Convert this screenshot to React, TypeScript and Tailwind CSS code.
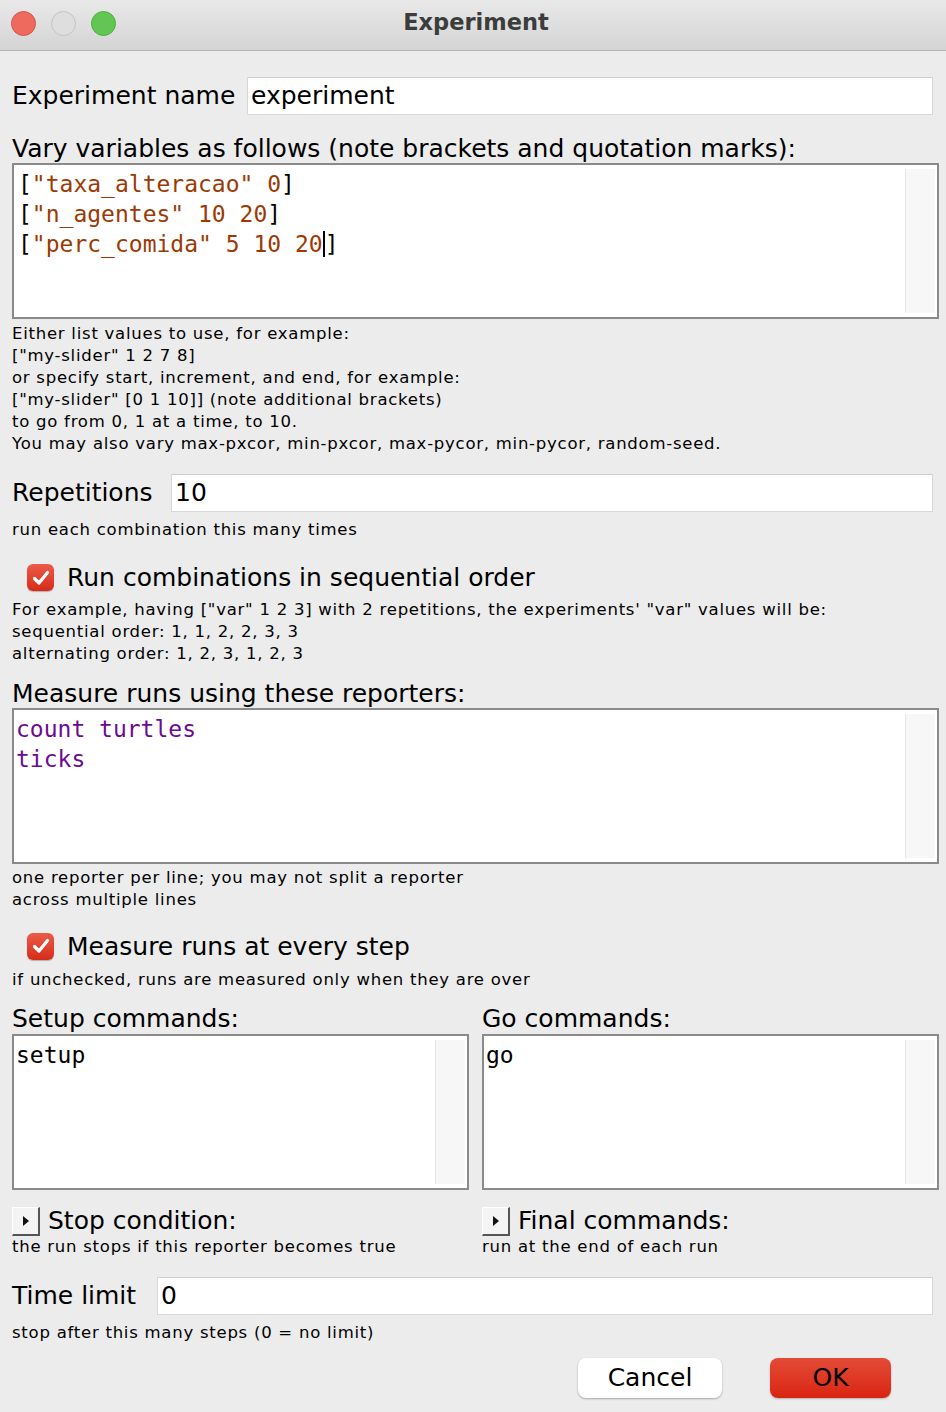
import React from 'react';

const ui = "font-['DejaVu_Sans','Liberation_Sans',sans-serif]";
const mono = "font-['DejaVu_Sans_Mono','Liberation_Mono',monospace]";
const small = 'text-[16.5px] leading-[22px] tracking-[0.75px]';

function Check() {
  return (
    <span className="w-[27px] h-[27px] rounded-[6px] bg-gradient-to-b from-[#ec5a48] to-[#d52a17] flex items-center justify-center shrink-0 shadow-[0_1px_1px_rgba(0,0,0,0.25)]">
      <svg width="18" height="16" viewBox="0 0 18 16">
        <path d="M2.5 8.5 L7 13 L15.5 2.5" fill="none" stroke="white" strokeWidth="3.2" strokeLinecap="round" strokeLinejoin="round" />
      </svg>
    </span>
  );
}

function TextArea({ children, pad = 'pl-[2px]' }: { children?: React.ReactNode; pad?: string }) {
  return (
    <div className="border-2 border-[#8a8a8a] bg-white flex h-[156px]">
      <div className={`flex-1 ${pad} pt-[4px] text-[23px] leading-[30px] ${mono}`}>{children}</div>
      <div className="w-[30px] bg-[#f7f7f7] border-l border-[#e6e6e6] my-[4px] mr-[2px]" />
    </div>
  );
}

function Field({ label, value, labelW }: { label: string; value: string; labelW: string }) {
  return (
    <div className="flex items-center">
      <span className={`text-[25px] text-black ${labelW}`}>{label}</span>
      <div className="flex-1 h-[38px] bg-white border border-[#d8d8d8] border-t-[#cfcfcf] mr-[6px] flex items-center pl-[3px] text-[25px]">
        {value}
      </div>
    </div>
  );
}

function Disclosure() {
  return (
    <span className="w-[28px] h-[29px] bg-[#f4f4f4] border-r-2 border-b-2 border-[#555] border-t border-l border-t-white border-l-white flex items-center justify-center shrink-0">
      <svg width="8" height="12" viewBox="0 0 8 12"><path d="M1 1 L7 6 L1 11 Z" fill="#111" /></svg>
    </span>
  );
}

export default function App() {
  const str = 'text-[#9c3a05]';
  return (
    <div className={`w-[946px] h-[1412px] bg-[#ececec] text-black ${ui}`}>
      {/* title bar */}
      <div className="h-[51px] bg-gradient-to-b from-[#e9e9e9] to-[#d4d4d4] border-b border-[#b5b5b5] flex items-center relative">
        <div className="flex gap-[15px] pl-[11px] absolute left-0 top-[11px]">
          <span className="w-[25px] h-[25px] rounded-full bg-[#ee6a5f] border border-[#d6534a]" />
          <span className="w-[25px] h-[25px] rounded-full bg-[#dedede] border border-[#c4c4c4]" />
          <span className="w-[25px] h-[25px] rounded-full bg-[#62c554] border border-[#4fae42]" />
        </div>
        <div className="flex-1 text-center text-[22.5px] font-bold text-[#3c3c3c] pb-[4px] pl-[6px]">Experiment</div>
      </div>

      <div className="pl-[12px] pt-[26px] pr-[7px]">
        <Field label="Experiment name" value="experiment" labelW="w-[235px]" />

        <div className="text-[25px] mt-[20px] leading-[28px]">Vary variables as follows (note brackets and quotation marks):</div>
        <TextArea pad="pl-[4px]">
          <div>[<span className={str}>"taxa_alteracao" 0</span>]</div>
          <div>[<span className={str}>"n_agentes" 10 20</span>]</div>
          <div>[<span className={str}>"perc_comida" 5 10 20</span><span className="border-l-2 border-black" />]</div>
        </TextArea>
        <div className={`${small} mt-[4px]`}>
          <div>Either list values to use, for example:</div>
          <div>["my-slider" 1 2 7 8]</div>
          <div>or specify start, increment, and end, for example:</div>
          <div>["my-slider" [0 1 10]] (note additional brackets)</div>
          <div>to go from 0, 1 at a time, to 10.</div>
          <div>You may also vary max-pxcor, min-pxcor, max-pycor, min-pycor, random-seed.</div>
        </div>

        <div className="mt-[19px]">
          <Field label="Repetitions" value="10" labelW="w-[159px]" />
        </div>
        <div className={`${small} mt-[7px]`}>run each combination this many times</div>

        <div className="flex items-center gap-[13px] pl-[15px] mt-[18px]">
          <Check />
          <span className="text-[25px]">Run combinations in sequential order</span>
        </div>
        <div className={`${small} mt-[2px]`}>
          <div>For example, having ["var" 1 2 3] with 2 repetitions, the experiments' "var" values will be:</div>
          <div>sequential order: 1, 1, 2, 2, 3, 3</div>
          <div>alternating order: 1, 2, 3, 1, 2, 3</div>
        </div>

        <div className="text-[25px] leading-[28px] mt-[15px]">Measure runs using these reporters:</div>
        <TextArea>
          <div className="text-[#6c0a94]">count turtles</div>
          <div className="text-[#6c0a94]">ticks</div>
        </TextArea>
        <div className={`${small} mt-[3px]`}>
          <div>one reporter per line; you may not split a reporter</div>
          <div>across multiple lines</div>
        </div>

        <div className="flex items-center gap-[13px] pl-[15px] mt-[17px]">
          <Check />
          <span className="text-[25px]">Measure runs at every step</span>
        </div>
        <div className={`${small} mt-[4px]`}>if unchecked, runs are measured only when they are over</div>

        <div className="grid grid-cols-2 gap-[13px] mt-[13px]">
          <div>
            <div className="text-[25px] leading-[30px]">Setup commands:</div>
            <TextArea>setup</TextArea>
            <div className="flex items-center gap-[8px] mt-[16px]">
              <Disclosure />
              <span className="text-[25px] leading-[30px]">Stop condition:</span>
            </div>
            <div className={small}>the run stops if this reporter becomes true</div>
          </div>
          <div>
            <div className="text-[25px] leading-[30px]">Go commands:</div>
            <TextArea>go</TextArea>
            <div className="flex items-center gap-[8px] mt-[16px]">
              <Disclosure />
              <span className="text-[25px] leading-[30px]">Final commands:</span>
            </div>
            <div className={small}>run at the end of each run</div>
          </div>
        </div>

        <div className="mt-[19px]">
          <Field label="Time limit" value="0" labelW="w-[145px]" />
        </div>
        <div className={`${small} mt-[7px]`}>stop after this many steps (0 = no limit)</div>

        <div className="flex justify-end gap-[48px] pr-[48px] mt-[14px]">
          <button className="w-[144px] h-[40px] bg-white rounded-[8px] shadow-[0_1px_2px_rgba(0,0,0,0.3)] text-[25px] text-black">Cancel</button>
          <button className="w-[121px] h-[40px] rounded-[8px] bg-gradient-to-b from-[#e34a36] to-[#d9220f] shadow-[0_1px_2px_rgba(0,0,0,0.25)] text-[25px] text-black">OK</button>
        </div>
      </div>
    </div>
  );
}
